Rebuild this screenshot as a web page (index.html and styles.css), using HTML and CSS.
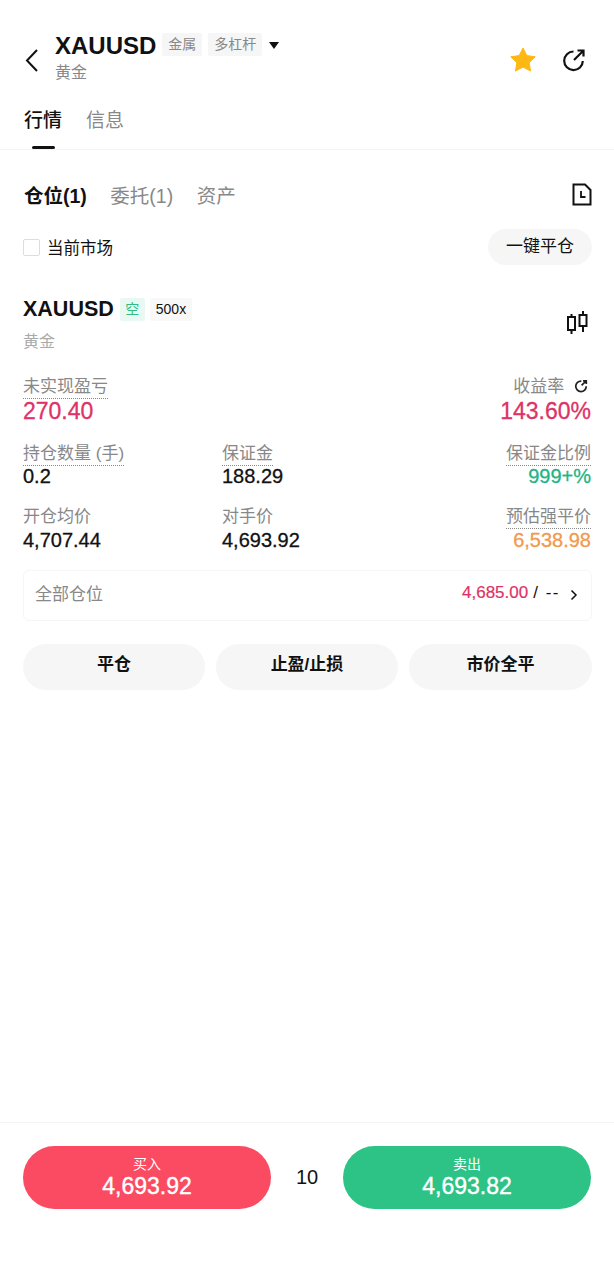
FILE: index.html
```html
<!DOCTYPE html>
<html>
<head>
    <title>XAUUSD</title>
    <link rel="stylesheet" href="styles.css">
</head>
<body>
    <div class="page">
        <div class="header">
            <svg class="back" width="13" height="23" viewBox="0 0 13 23"><path d="M12 1 L2 11.5 L12 22" fill="none" stroke="#111" stroke-width="2"/></svg>
            <div class="title-wrap">
                <div class="title-row">
                    <span class="symbol">XAUUSD</span>
                    <span class="tag">金属</span>
                    <span class="tag">多杠杆</span>
                    <span class="caret"></span>
                </div>
                <div class="subname">黄金</div>
            </div>
            <svg class="star" width="28" height="28" viewBox="0 0 28 28"><path d="M14 2 L17.8 9.6 L26.2 10.8 L20.1 16.7 L21.6 25 L14 21.1 L6.4 25 L7.9 16.7 L1.8 10.8 L10.2 9.6 Z" fill="#fdb813" stroke="#fdb813" stroke-linejoin="round"/></svg>
            <svg class="share" width="24" height="24" viewBox="0 0 24 24"><path d="M11.5 3.5 A9.3 9.3 0 1 0 20.8 13" fill="none" stroke="#111" stroke-width="2.2"/><path d="M12 12 L21.5 2.5 M15.5 2.5 H21.5 V8.5" fill="none" stroke="#111" stroke-width="2.2"/></svg>
        </div>

        <div class="tabs">
            <div class="tab active">行情</div>
            <div class="tab">信息</div>
        </div>

        <div class="subtabs">
            <span class="subtab active">仓位(1)</span>
            <span class="subtab">委托(1)</span>
            <span class="subtab">资产</span>
            <svg class="doc" width="20" height="23" viewBox="0 0 20 23"><path d="M1.5 1.5 H13 L18.5 7 V21.5 H1.5 Z" fill="none" stroke="#111" stroke-width="2"/><path d="M9 8 V14 H13.5" fill="none" stroke="#111" stroke-width="1.8"/></svg>
        </div>

        <div class="filter">
            <span class="check"></span>
            <span class="filter-label">当前市场</span>
            <span class="close-all">一键平仓</span>
        </div>

        <div class="position">
            <div class="pos-head">
                <div>
                    <div class="pos-title">
                        <span class="pos-symbol">XAUUSD</span>
                        <span class="side">空</span>
                        <span class="lev">500x</span>
                    </div>
                    <div class="pos-name">黄金</div>
                </div>
                <svg class="candle" width="24" height="25" viewBox="0 0 24 25"><path d="M5.5 4 V7 M5.5 20 V24 M17 1 V5 M17 16 V22" stroke="#111" stroke-width="2"/><rect x="2" y="7" width="7" height="13" fill="none" stroke="#111" stroke-width="2"/><rect x="13.5" y="5" width="7" height="11" fill="none" stroke="#111" stroke-width="2"/></svg>
            </div>

            <div class="metrics">
                <div class="metric big">
                    <span class="label dotted">未实现盈亏</span>
                    <span class="value red">270.40</span>
                </div>
                <div class="metric big"></div>
                <div class="metric big right">
                    <span class="label plain">收益率
                        <svg class="refresh" width="14" height="14" viewBox="0 0 24 24"><path d="M12.5 3.5 A9 9 0 1 0 21 12.5" fill="none" stroke="#222" stroke-width="3"/><path d="M13 11 L21 3 M15.5 3 H21 V8.5" fill="none" stroke="#222" stroke-width="3"/></svg>
                    </span>
                    <span class="value red">143.60%</span>
                </div>
                <div class="metric">
                    <span class="label dotted">持仓数量 (手)</span>
                    <span class="value tight">0.2</span>
                </div>
                <div class="metric">
                    <span class="label dotted">保证金</span>
                    <span class="value tight">188.29</span>
                </div>
                <div class="metric right">
                    <span class="label dotted">保证金比例</span>
                    <span class="value tight green">999+%</span>
                </div>
                <div class="metric">
                    <span class="label plain">开仓均价</span>
                    <span class="value">4,707.44</span>
                </div>
                <div class="metric">
                    <span class="label plain">对手价</span>
                    <span class="value">4,693.92</span>
                </div>
                <div class="metric right">
                    <span class="label dotted">预估强平价</span>
                    <span class="value orange">6,538.98</span>
                </div>
            </div>

            <div class="all-pos">
                <span class="all-label">全部仓位</span>
                <span class="all-price">4,685.00</span>
                <span class="all-rest">/ --</span>
                <svg class="chevron" width="8" height="12" viewBox="0 0 8 12"><path d="M1.5 1.5 L6 6 L1.5 10.5" fill="none" stroke="#111" stroke-width="1.5"/></svg>
            </div>

            <div class="actions">
                <div class="action">平仓</div>
                <div class="action">止盈/止损</div>
                <div class="action">市价全平</div>
            </div>
        </div>

        <div class="footer">
            <div class="trade buy">
                <span class="trade-label">买入</span>
                <span class="trade-price">4,693.92</span>
            </div>
            <div class="qty">10</div>
            <div class="trade sell">
                <span class="trade-label">卖出</span>
                <span class="trade-price">4,693.82</span>
            </div>
        </div>
    </div>
</body>
</html>
```

FILE: styles.css
```css
body {
    margin: 0;
    background-color: #ffffff;
    font-family: "Liberation Sans", "Noto Sans CJK SC", sans-serif;
    color: #111111;
}

.page {
    display: flex;
    flex-direction: column;
    height: 1280px;
    overflow: hidden;
}

.header {
    display: flex;
    align-items: center;
    height: 62px;
    margin-top: 29px;
    padding: 0 28px 0 25px;
}

.title-wrap {
    flex: 1;
    margin: -8px 0 0 17px;
}

.title-row {
    display: flex;
    align-items: center;
    height: 34px;
}

.symbol {
    font-size: 24px;
    font-weight: bold;
    margin-right: 6px;
}

.tag {
    height: 23px;
    line-height: 23px;
    padding: 0 6px;
    margin: -3px 6px 0 0;
    background-color: #f6f6f6;
    color: #888888;
    font-size: 14px;
    border-radius: 2px;
}

.caret {
    width: 0;
    height: 0;
    margin: -2px 0 0 1px;
    border-left: 5px solid transparent;
    border-right: 5px solid transparent;
    border-top: 7px solid #111111;
}

.subname {
    font-size: 16px;
    line-height: 20px;
    color: #888888;
}

.star {
    margin-right: 25px;
}

.tabs {
    display: flex;
    gap: 24px;
    height: 58px;
    padding: 0 24px;
    border-bottom: 1px solid #f3f3f3;
}

.tab {
    position: relative;
    font-size: 19px;
    line-height: 60px;
    color: #888888;
}

.tab.active {
    color: #111111;
    font-weight: 500;
}

.tab.active::after {
    content: "";
    position: absolute;
    left: 8px;
    bottom: 0;
    width: 23px;
    height: 3px;
    border-radius: 2px;
    background-color: #111111;
}

.subtabs {
    display: flex;
    align-items: center;
    gap: 23.5px;
    height: 34px;
    margin-top: 27px;
    padding: 0 22px 0 24px;
}

.subtab {
    font-size: 19.5px;
    color: #888888;
}

.subtab.active {
    color: #111111;
    font-weight: bold;
}

.doc {
    margin-left: auto;
}

.filter {
    display: flex;
    align-items: center;
    height: 36px;
    margin-top: 18px;
    padding: 0 22px 0 23px;
}

.check {
    width: 15px;
    height: 15px;
    border: 1px solid #dddddd;
    border-radius: 2px;
}

.filter-label {
    margin-left: 7px;
    font-size: 16.5px;
}

.close-all {
    margin-left: auto;
    width: 104px;
    height: 36px;
    line-height: 36px;
    text-align: center;
    font-size: 17px;
    border-radius: 18px;
    background-color: #f6f6f6;
}

.position {
    padding: 0 22px 0 23px;
}

.pos-head {
    display: flex;
    justify-content: space-between;
    align-items: center;
    margin-top: 31px;
}

.pos-title {
    display: flex;
    align-items: center;
    height: 26px;
}

.pos-symbol {
    font-size: 21.5px;
    font-weight: bold;
    margin-right: 6px;
}

.side {
    width: 25px;
    height: 23px;
    line-height: 23px;
    text-align: center;
    font-size: 14px;
    color: #2dbd85;
    background-color: #e9f9f2;
    border-radius: 2px;
}

.lev {
    height: 23px;
    line-height: 23px;
    margin-left: 5px;
    padding: 0 6px;
    font-size: 14px;
    background-color: #f8f8f8;
    border-radius: 2px;
}

.pos-name {
    margin-top: 8px;
    font-size: 16px;
    line-height: 24px;
    color: #aaaaaa;
}

.candle {
    margin: -6px 2px 0 0;
}

.metrics {
    display: grid;
    grid-template-columns: 199px 1fr 1fr;
    margin: 22px 1px 0 0;
}

.metric {
    display: flex;
    flex-direction: column;
    align-items: flex-start;
    height: 63px;
}

.metric.big {
    height: 67px;
}

.metric.right {
    align-items: flex-end;
}

.label {
    font-size: 17px;
    line-height: 22px;
    color: #888888;
}

.dotted {
    border-bottom: 1px dotted #888888;
}

.plain {
    border-bottom: 1px solid transparent;
}

.refresh {
    margin: 0 3px 0 5px;
    vertical-align: -1px;
}

.value {
    font-size: 20px;
    line-height: 23px;
    -webkit-text-stroke: 0.3px;
}

.value.tight {
    line-height: 21px;
}

.big .value {
    font-size: 23px;
    line-height: 24px;
}

.red {
    color: #dd3366;
}

.green {
    color: #22b386;
}

.orange {
    color: #f09a4e;
}

.all-pos {
    display: flex;
    align-items: center;
    height: 43px;
    margin-top: 1px;
    padding: 0 13px 6px 11px;
    border: 1px solid #f6f6f6;
    border-radius: 6px;
}

.all-label {
    font-size: 17px;
    color: #888888;
}

.all-price {
    margin-left: auto;
    font-size: 17px;
    color: #dd3366;
    -webkit-text-stroke: 0.2px;
}

.all-rest {
    margin-left: 5px;
    font-size: 17px;
    letter-spacing: 1.5px;
}

.chevron {
    margin: 4px 0 0 10px;
}

.actions {
    display: grid;
    grid-template-columns: 182px 182px 183px;
    gap: 11px;
    margin-top: 23px;
}

.action {
    height: 46px;
    line-height: 42px;
    text-align: center;
    font-size: 17px;
    font-weight: bold;
    border-radius: 23px;
    background-color: #f6f6f6;
}

.footer {
    display: flex;
    align-items: center;
    height: 63px;
    margin-top: auto;
    margin-bottom: 71px;
    padding: 23px 23px 0;
    border-top: 1px solid #f3f3f3;
}

.trade {
    display: flex;
    flex-direction: column;
    align-items: center;
    justify-content: center;
    width: 248px;
    height: 63px;
    border-radius: 32px;
    color: #ffffff;
}

.buy {
    background-color: #fb4b62;
}

.sell {
    background-color: #2dc386;
}

.trade-label {
    font-size: 14px;
    line-height: 18px;
}

.trade-price {
    font-size: 23px;
    line-height: 27px;
    -webkit-text-stroke: 0.4px;
}

.qty {
    flex: 1;
    text-align: center;
    font-size: 20px;
}
```
